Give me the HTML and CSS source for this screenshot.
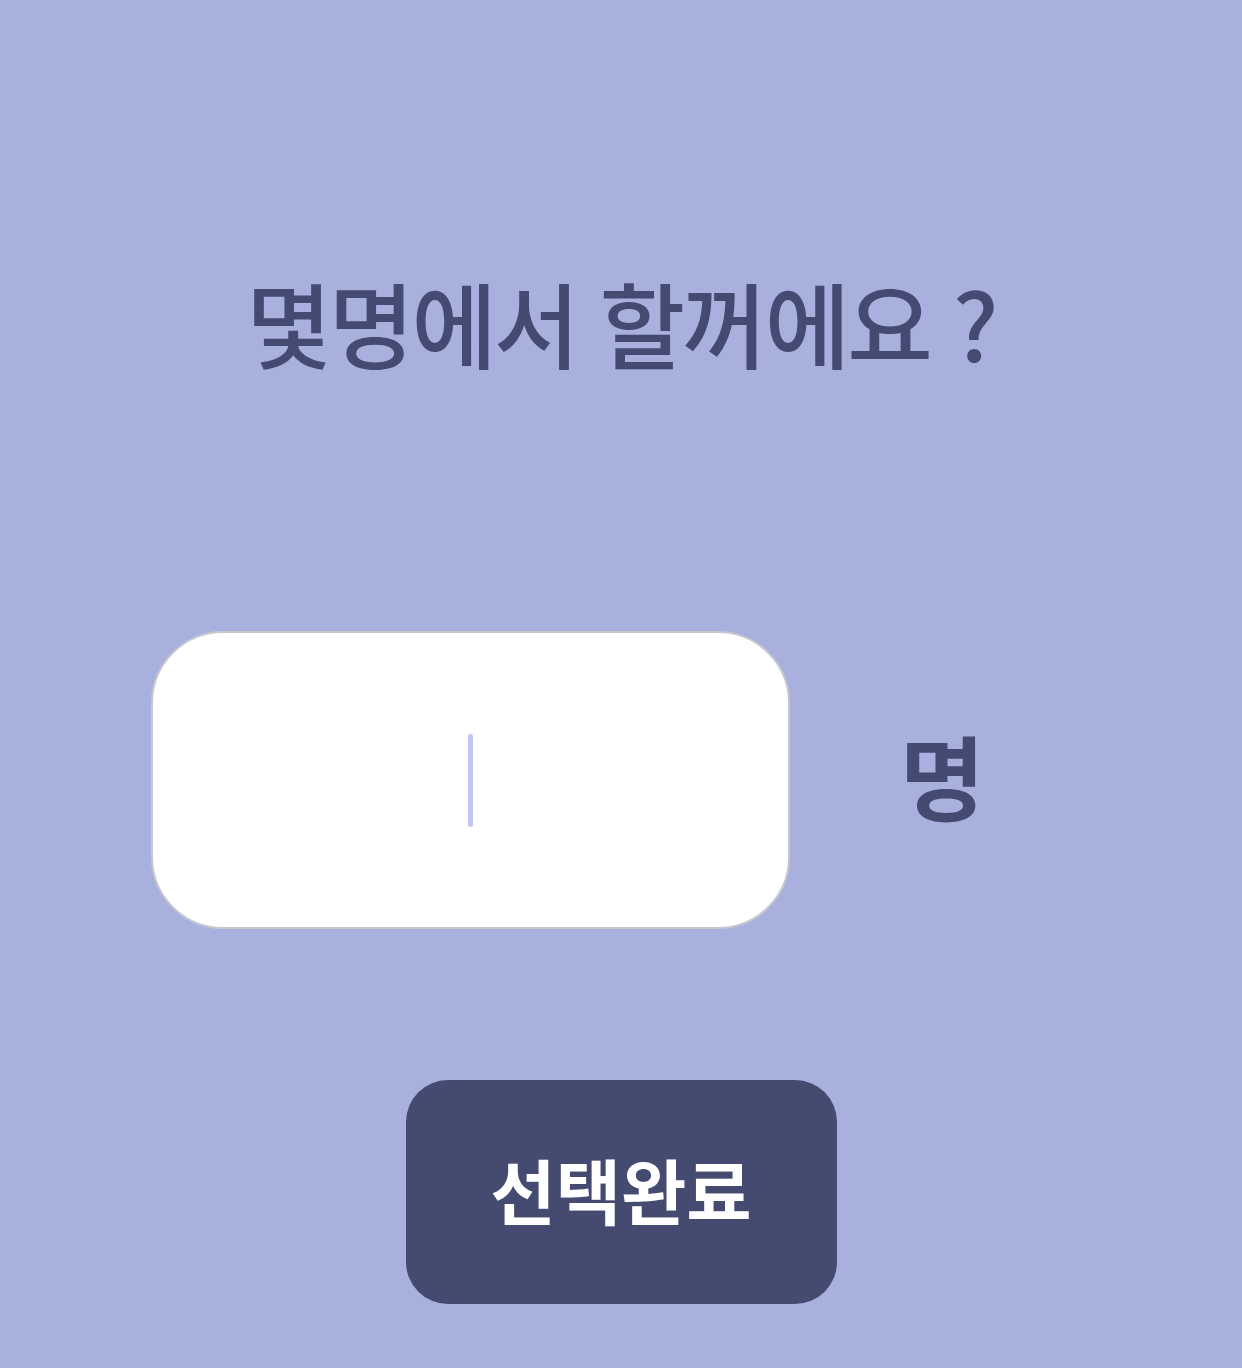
FILE: index.html
```html
<!DOCTYPE html>
<html lang="ko">

<head>
    <meta charset="UTF-8">
    <meta name="viewport" content="width=device-width, initial-scale=1">
    <title>인원 선택</title>
    <link rel="stylesheet" href="styles.css">
</head>

<body>
<main class="page">
    <h1 class="title">몇명에서 할꺼에요 ?</h1>

    <div class="row">
        <div class="inputbox">
            <span class="cursor"></span>
        </div>
        <span class="unit">명</span>
    </div>

    <button class="done">선택완료</button>
</main>
</body>

</html>
```

FILE: styles.css
```css
body {
    margin: 0;
    background-color: #a8b0de;
    font-family: "Noto Sans CJK KR", "Noto Sans", sans-serif;
}

.page {
    height: 1368px;
    display: flex;
    flex-direction: column;
    align-items: center;
}

.title {
    margin: 266px 0 0 0;
    font-size: 93px;
    font-weight: 500;
    line-height: 112px;
    color: #444a72;
    letter-spacing: -3px;
}

.row {
    align-self: stretch;
    display: flex;
    align-items: center;
    gap: 110px;
    padding-left: 151px;
    margin-top: 253px;
}

.inputbox {
    width: 635px;
    height: 294px;
    background-color: white;
    border: 2px solid #c6c7cf;
    border-radius: 72px;
    display: flex;
    justify-content: center;
    align-items: center;
}

.cursor {
    width: 5px;
    height: 93px;
    border-radius: 3px;
    background-color: #c0c7f3;
}

.unit {
    font-size: 92px;
    font-weight: 700;
    color: #444a72;
    margin-bottom: 14px;
}

.done {
    margin-top: 151px;
    width: 431px;
    height: 224px;
    border: none;
    border-radius: 42px;
    background-color: #444a70;
    color: white;
    font-family: "Noto Sans CJK KR", "Noto Sans", sans-serif;
    font-size: 71px;
    font-weight: 700;
    padding-bottom: 10px;
}
```
